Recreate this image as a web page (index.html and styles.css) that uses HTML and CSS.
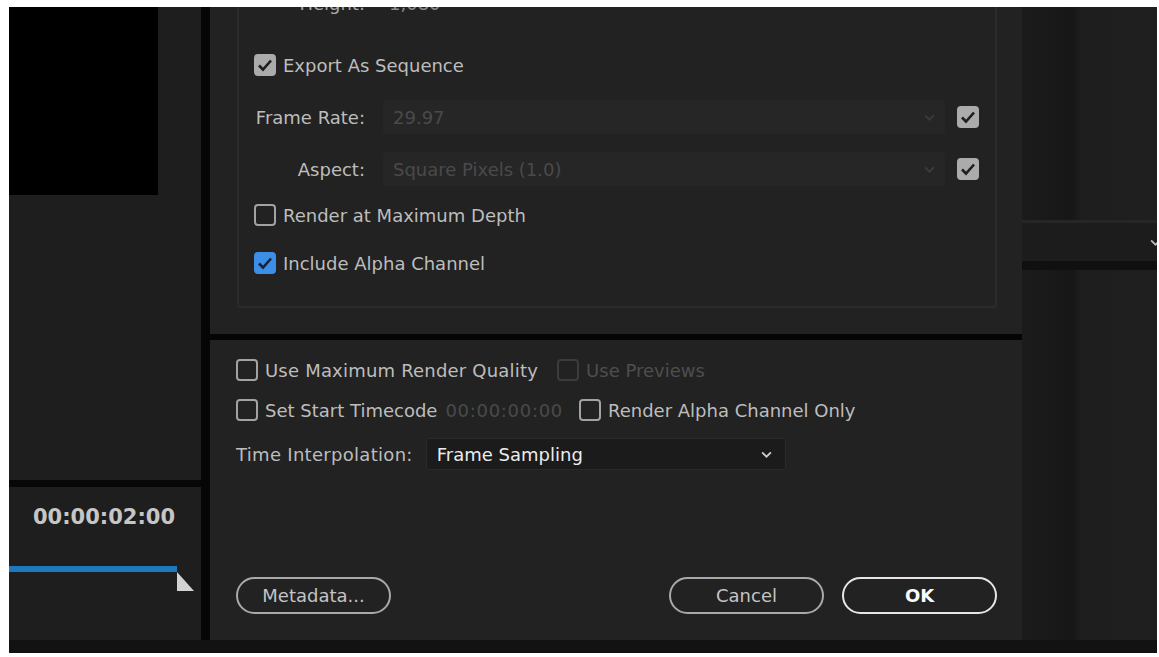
FILE: index.html
```html
<!DOCTYPE html>
<html lang="en">
  <head>
    <meta charset="UTF-8" />
    <meta name="viewport" content="width=device-width, initial-scale=1.0" />
    <title>Export Settings</title>

    <link rel="stylesheet" href="styles.css">
  </head>
  <body>
    <div class="screen">
      <div class="main">
        <!-- source monitor on the left -->
        <aside class="monitor">
          <div class="video"></div>
          <div class="monitor-fill"></div>
          <div class="timecode-panel">
            <div class="timecode">00:00:02:00</div>
            <div class="scrubber">
              <div class="progress"></div>
              <svg class="playhead" width="18" height="26" viewBox="0 0 18 26"><polygon points="0,6 0,25 17,25" fill="#d2d2d2"/></svg>
            </div>
          </div>
        </aside>
        <div class="vsep"></div>

        <!-- export dialog -->
        <section class="dialog">
          <div class="dialog-top">
            <div class="settings">
              <div class="row row-height">
                <span class="label">Height:</span>
                <span class="value">1,080</span>
              </div>
              <div class="row row-export">
                <label class="check"><span class="box on"><svg viewBox="0 0 22 22"><polyline points="5,11.5 9,15.5 17,6.5"/></svg></span>Export As Sequence</label>
              </div>
              <div class="row row-rate">
                <span class="label">Frame Rate:</span>
                <div class="select dim">29.97<svg class="chev" viewBox="0 0 10 6"><polyline points="1,1 5,5 9,1"/></svg></div>
                <span class="box on"><svg viewBox="0 0 22 22"><polyline points="5,11.5 9,15.5 17,6.5"/></svg></span>
              </div>
              <div class="row row-aspect">
                <span class="label">Aspect:</span>
                <div class="select dim">Square Pixels (1.0)<svg class="chev" viewBox="0 0 10 6"><polyline points="1,1 5,5 9,1"/></svg></div>
                <span class="box on"><svg viewBox="0 0 22 22"><polyline points="5,11.5 9,15.5 17,6.5"/></svg></span>
              </div>
              <div class="row row-depth">
                <label class="check"><span class="box"></span>Render at Maximum Depth</label>
              </div>
              <div class="row row-alpha">
                <label class="check"><span class="box blue"><svg viewBox="0 0 22 22"><polyline points="5,11.5 9,15.5 17,6.5"/></svg></span>Include Alpha Channel</label>
              </div>
            </div>
          </div>

          <div class="dialog-bottom">
            <div class="line line-quality">
              <label class="check"><span class="box"></span>Use Maximum Render Quality</label>
              <label class="check disabled"><span class="box"></span>Use Previews</label>
            </div>
            <div class="line line-timecode">
              <label class="check"><span class="box"></span>Set Start Timecode</label>
              <span class="tc-field">00:00:00:00</span>
              <label class="check"><span class="box"></span>Render Alpha Channel Only</label>
            </div>
            <div class="line line-interp">
              <span class="interp-label">Time Interpolation:</span>
              <div class="select interp">Frame Sampling<svg class="chev" viewBox="0 0 10 6"><polyline points="1,1 5,5 9,1"/></svg></div>
            </div>
            <div class="buttons">
              <button class="btn">Metadata...</button>
              <span class="spacer"></span>
              <button class="btn">Cancel</button>
              <button class="btn ok">OK</button>
            </div>
          </div>
        </section>

        <!-- panels behind the dialog -->
        <aside class="side">
          <div class="side-band">
            <svg class="side-chev" viewBox="0 0 10 6"><polyline points="1,1 5,5 9,1"/></svg>
          </div>
        </aside>
      </div>
      <div class="footer-strip"></div>
    </div>
  </body>
</html>
```

FILE: styles.css
```css
* {
  margin: 0;
  padding: 0;
  box-sizing: border-box;
}
body {
  background: #fff;
  font-family: "DejaVu Sans", "Liberation Sans", sans-serif;
  font-size: 18px;
  color: #bdbdbd;
}
/*whole screenshot*/
.screen {
  margin: 7px 2px 0 9px;
  height: 646px;
  background: #131313;
  display: flex;
  flex-direction: column;
  overflow: hidden;
}
.main {
  display: flex;
  height: 633px;
}
.footer-strip {
  height: 13px;
  background: #121212;
}

/*left monitor*/
.monitor {
  width: 192px;
  display: flex;
  flex-direction: column;
  background: #1e1e1e;
}
.video {
  width: 149px;
  height: 188px;
  background: #000;
}
.monitor-fill {
  flex: 1;
}
.timecode-panel {
  height: 160px;
  border-top: 7px solid #070707;
  padding-top: 18px;
}
.timecode {
  padding-left: 24px;
  line-height: 24px;
  font-size: 21px;
  font-weight: bold;
  color: #c6c6c6;
}
.scrubber {
  display: flex;
  margin-top: 37px;
}
.progress {
  width: 168px;
  height: 6px;
  background: #1d78bd;
}
.vsep {
  width: 9px;
  background: #060606;
}

/*dialog*/
.dialog {
  width: 812px;
  background: #222;
  display: flex;
  flex-direction: column;
}
.dialog-top {
  height: 333px;
  overflow: hidden;
  border-bottom: 6px solid #050505;
}
.settings {
  margin: -35px 25px 0 27px;
  padding: 12px 0 26px 14px;
  border: 2px solid #2b2b2b;
  border-radius: 3px;
}
.row {
  display: flex;
  align-items: center;
  height: 34px;
}
.row-export {
  margin-top: 28px;
}
.row-export .check {
  margin-left: 1px;
}
.row-rate,
.row-aspect {
  margin-top: 18px;
}
.row-depth {
  margin-top: 12px;
}
.row-alpha {
  margin-top: 14px;
}
.row-depth .check,
.row-alpha .check {
  margin-left: 1px;
}
.label {
  width: 112px;
  text-align: right;
}
.row-height .label {
  color: #a8a8a8;
}
.value {
  margin-left: 24px;
  color: #8a8a8a;
}
.select {
  display: flex;
  align-items: center;
  height: 34px;
  border-radius: 3px;
  padding: 0 10px;
}
.select.dim {
  width: 562px;
  margin: 0 12px 0 18px;
  background: #262626;
  color: #4a4a4a;
}
.chev {
  width: 11px;
  height: 7px;
  margin-left: auto;
  fill: none;
  stroke: #3c3c3c;
  stroke-width: 1.6;
}

/*checkboxes*/
.check {
  display: flex;
  align-items: center;
  gap: 7px;
}
.box {
  width: 22px;
  height: 22px;
  flex: none;
  border: 2px solid #a2a2a2;
  border-radius: 4px;
}
.box svg {
  display: block;
  width: 22px;
  height: 22px;
  margin: -2px;
  fill: none;
  stroke: #1e1e1e;
  stroke-width: 2.6;
}
.box.on {
  background: #ababab;
  border-color: #ababab;
}
.box.blue {
  background: #3d8ee6;
  border-color: #3d8ee6;
}
.box.blue svg {
  stroke: #13253b;
}
.check.disabled {
  color: #4e4e4e;
}
.check.disabled .box {
  border-color: #3c3c3c;
}

/*lower part of the dialog*/
.dialog-bottom {
  flex: 1;
  padding: 17px 25px 26px 26px;
  display: flex;
  flex-direction: column;
}
.line {
  display: flex;
  align-items: center;
  height: 26px;
}
.line-quality .check:first-child {
  letter-spacing: 0.2px;
}
.line-quality .disabled {
  margin-left: 19px;
}
.line-timecode {
  margin-top: 14px;
}
.tc-field {
  margin: 0 16px 0 8px;
  letter-spacing: 0.7px;
  color: #4a4a4a;
}
.line-interp {
  margin-top: 15px;
  height: 32px;
}
.interp-label {
  letter-spacing: 0.3px;
}
.select.interp {
  width: 360px;
  height: 32px;
  margin-left: 13px;
  background: #1b1b1b;
  border: 1px solid #292929;
  color: #ececec;
}
.select.interp .chev {
  margin-right: 3px;
  stroke: #cfcfcf;
}
.buttons {
  display: flex;
  margin-top: auto;
  gap: 18px;
}
.spacer {
  flex: 1;
}
.btn {
  width: 155px;
  height: 37px;
  border: 2px solid #a9a9a9;
  border-radius: 19px;
  background: transparent;
  font-family: inherit;
  font-size: 18px;
  color: #c4c4c4;
}
.btn.ok {
  border-color: #e6e6e6;
  color: #fafafa;
  font-weight: bold;
}

/*background panels on the right*/
.side {
  flex: 1;
  background: linear-gradient(to right, #1b1b1b 0, #171717 50px, #1e1e1e 60px, #1f1f1f 100%);
}
.side-band {
  display: flex;
  align-items: center;
  margin-top: 213px;
  height: 50px;
  border-top: 3px solid #262626;
  border-bottom: 9px solid #101010;
  background: #1c1c1c;
}
.side-chev {
  width: 11px;
  height: 7px;
  margin: 0 -4px 0 auto;
  fill: none;
  stroke: #bdbdbd;
  stroke-width: 1.6;
}
```
